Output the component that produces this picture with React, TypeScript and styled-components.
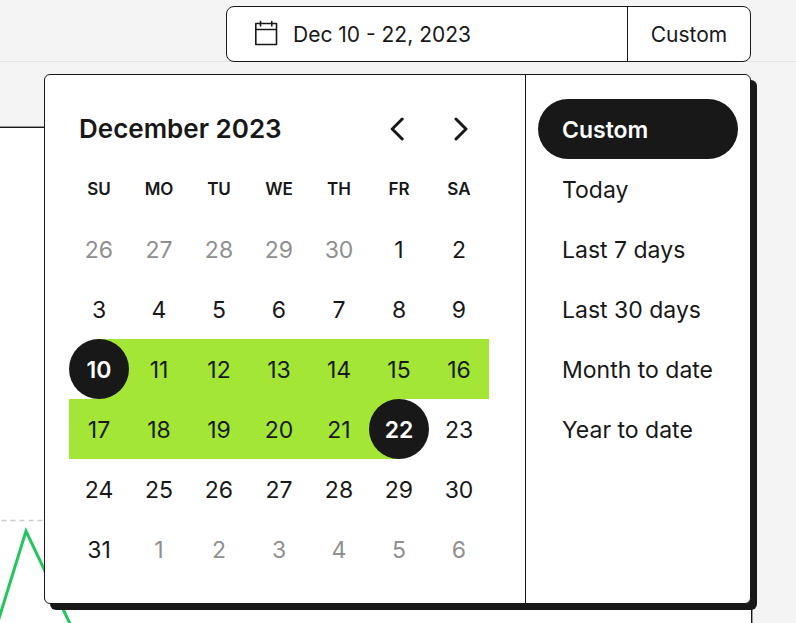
import React from "react";
import styled, { createGlobalStyle, css } from "styled-components";

const ink = "#181818";
const lime = "#a3e635";

const GlobalStyle = createGlobalStyle`
  *, *::before, *::after { box-sizing: border-box; }
  html, body { margin: 0; background: #f4f4f4; }
  body {
    color: ${ink};
    font-family: Inter, "Liberation Sans", sans-serif;
    font-size: 23px;
    line-height: 30px;
    overflow: hidden;
  }
  button { font: inherit; color: inherit; background: none; border: 0; padding: 0; cursor: pointer; }
`;

const Page = styled.div`
  display: flex;
  flex-direction: column;
  height: 100vh;
`;

const TopBar = styled.header`
  flex: none;
  display: flex;
  justify-content: flex-end;
  padding: 6px 45px 0 44px;
  height: 62px;
  border-bottom: 1px solid #e4e4e4;
`;

const RangePicker = styled.div`
  position: relative;
  flex: 1;
  display: flex;
  justify-content: flex-end;
`;

const Field = styled.div`
  display: flex;
  flex: 0 1 525px;
  height: 56px;
  background: #fff;
  border: 1px solid ${ink};
  border-radius: 8px;
  font-size: 21px;
`;

const RangeButton = styled.button`
  flex: 1;
  display: flex;
  align-items: center;
  gap: 15px;
  padding: 2px 27px 0;
  white-space: nowrap;
`;

const PresetButton = styled.button`
  flex: none;
  width: 123px;
  padding-top: 2px;
  border-left: 1px solid ${ink};
`;

const Popover = styled.section`
  position: absolute;
  z-index: 1;
  top: 68px;
  left: 0;
  right: 0;
  display: flex;
  background: #fff;
  border: 1px solid ${ink};
  border-radius: 6px;
  box-shadow: 6px 6px 0 ${ink};
`;

const Calendar = styled.div`
  flex: 1;
  padding: 24px 36px 24px 24px;
  border-right: 1px solid ${ink};
`;

const MonthBar = styled.div`
  display: flex;
  align-items: center;
  height: 60px;
  padding-left: 10px;
`;

const MonthTitle = styled.h2`
  flex: 1;
  margin: 0;
  font-size: 26px;
  font-weight: 600;
`;

const StepButton = styled.button`
  display: grid;
  place-items: center;
  width: 60px;
  height: 60px;
`;

const DayTable = styled.table`
  width: 100%;
  table-layout: fixed;
  border-collapse: collapse;
`;

const Weekday = styled.th`
  height: 60px;
  padding: 0;
  font-size: 17px;
  font-weight: 600;
`;

type Mark = "none" | "range" | "start" | "end";

const fills = {
  none: "none",
  range: lime,
  start: `linear-gradient(to right, transparent 50%, ${lime} 50%)`,
  end: `linear-gradient(to right, ${lime} 50%, transparent 50%)`,
};

const DayCell = styled.td<{ $mark: Mark }>`
  height: 60px;
  padding: 0;
  text-align: center;
  background: ${(p) => fills[p.$mark]};
`;

const DayButton = styled.button<{ $outside: boolean; $selected: boolean }>`
  display: block;
  width: 60px;
  height: 60px;
  margin: 0 auto;
  padding-top: 2px;
  border-radius: 50%;
  color: ${(p) => (p.$outside ? "#8f8f8f" : ink)};
  ${(p) =>
    p.$selected &&
    css`
      background: ${ink};
      color: #fff;
      font-weight: 600;
    `}
`;

const Presets = styled.ul`
  flex: none;
  width: 224px;
  margin: 0;
  padding: 24px 12px;
  list-style: none;
`;

const PresetOption = styled.button<{ $active: boolean }>`
  display: block;
  width: 100%;
  height: 60px;
  padding: 2px 0 0 24px;
  border-radius: 30px;
  text-align: left;
  white-space: nowrap;
  background: ${(p) => (p.$active ? ink : "transparent")};
  color: ${(p) => (p.$active ? "#fff" : ink)};
  font-weight: ${(p) => (p.$active ? 600 : 400)};
`;

const ChartPanel = styled.main`
  flex: 1;
  margin: 65px 44px 0 0;
  background: #fff;
  border: solid ${ink};
  border-width: 1px 1px 0 0;
  box-shadow: 0 0 0 1px #999;
  overflow: hidden;
`;

const Chart = styled.svg`
  display: block;
`;

const CalendarIcon = () => (
  <svg width="24" height="30" viewBox="0 0 24 30" fill="none" stroke={ink} strokeWidth="1.6" strokeLinejoin="round" strokeLinecap="round" aria-hidden="true">
    <path d="M1.8 3.5H22.5V24.5H1.8ZM1.8 9.5H22.5M6.5 1.5V6M17.8 1.5V6" />
  </svg>
);

const Chevron = ({ d }: { d: string }) => (
  <svg width="24" height="24" viewBox="0 0 24 24" fill="none" stroke={ink} strokeWidth="3" strokeLinecap="round" strokeLinejoin="round" aria-hidden="true">
    <path d={d} />
  </svg>
);

const weekdays = ["SU", "MO", "TU", "WE", "TH", "FR", "SA"];
const presets = ["Custom", "Today", "Last 7 days", "Last 30 days", "Month to date", "Year to date"];

const weeks = Array.from({ length: 6 }, (_, w) =>
  Array.from({ length: 7 }, (_, d) => {
    const date = new Date(2023, 10, 26 + w * 7 + d);
    const day = date.getDate();
    const outside = date.getMonth() !== 11;
    let mark: Mark = "none";
    if (!outside && day === 10) mark = "start";
    else if (!outside && day === 22) mark = "end";
    else if (!outside && day > 10 && day < 22) mark = "range";
    return { day, outside, mark };
  })
);

export default function App() {
  return (
    <>
      <GlobalStyle />
      <Page>
        <TopBar>
          <RangePicker>
            <Field>
              <RangeButton type="button" aria-expanded="true">
                <CalendarIcon />
                Dec 10 - 22, 2023
              </RangeButton>
              <PresetButton type="button">Custom</PresetButton>
            </Field>
            <Popover aria-label="Date range">
              <Calendar>
                <MonthBar>
                  <MonthTitle>December 2023</MonthTitle>
                  <StepButton type="button" aria-label="Previous month">
                    <Chevron d="M15.2 2L5.2 12L15.2 22" />
                  </StepButton>
                  <StepButton type="button" aria-label="Next month">
                    <Chevron d="M9 2L19 12L9 22" />
                  </StepButton>
                </MonthBar>
                <DayTable>
                  <thead>
                    <tr>
                      {weekdays.map((name) => (
                        <Weekday key={name} scope="col">{name}</Weekday>
                      ))}
                    </tr>
                  </thead>
                  <tbody>
                    {weeks.map((week, i) => (
                      <tr key={i}>
                        {week.map(({ day, outside, mark }) => (
                          <DayCell key={day} $mark={mark}>
                            <DayButton type="button" $outside={outside} $selected={mark === "start" || mark === "end"}>
                              {day}
                            </DayButton>
                          </DayCell>
                        ))}
                      </tr>
                    ))}
                  </tbody>
                </DayTable>
              </Calendar>
              <Presets>
                {presets.map((name) => (
                  <li key={name}>
                    <PresetOption type="button" $active={name === "Custom"} aria-pressed={name === "Custom"}>
                      {name}
                    </PresetOption>
                  </li>
                ))}
              </Presets>
            </Popover>
          </RangePicker>
        </TopBar>
        <ChartPanel>
          <Chart width="750" height="495" viewBox="0 128 750 495" role="img" aria-label="Trend line">
            <path d="M1.5 520.5H750" stroke="#ccc" strokeWidth="1.5" strokeDasharray="5 4" />
            <path d="M-4 628L26 531L72 628" fill="none" stroke="#22c55e" strokeWidth="3" />
          </Chart>
        </ChartPanel>
      </Page>
    </>
  );
}
